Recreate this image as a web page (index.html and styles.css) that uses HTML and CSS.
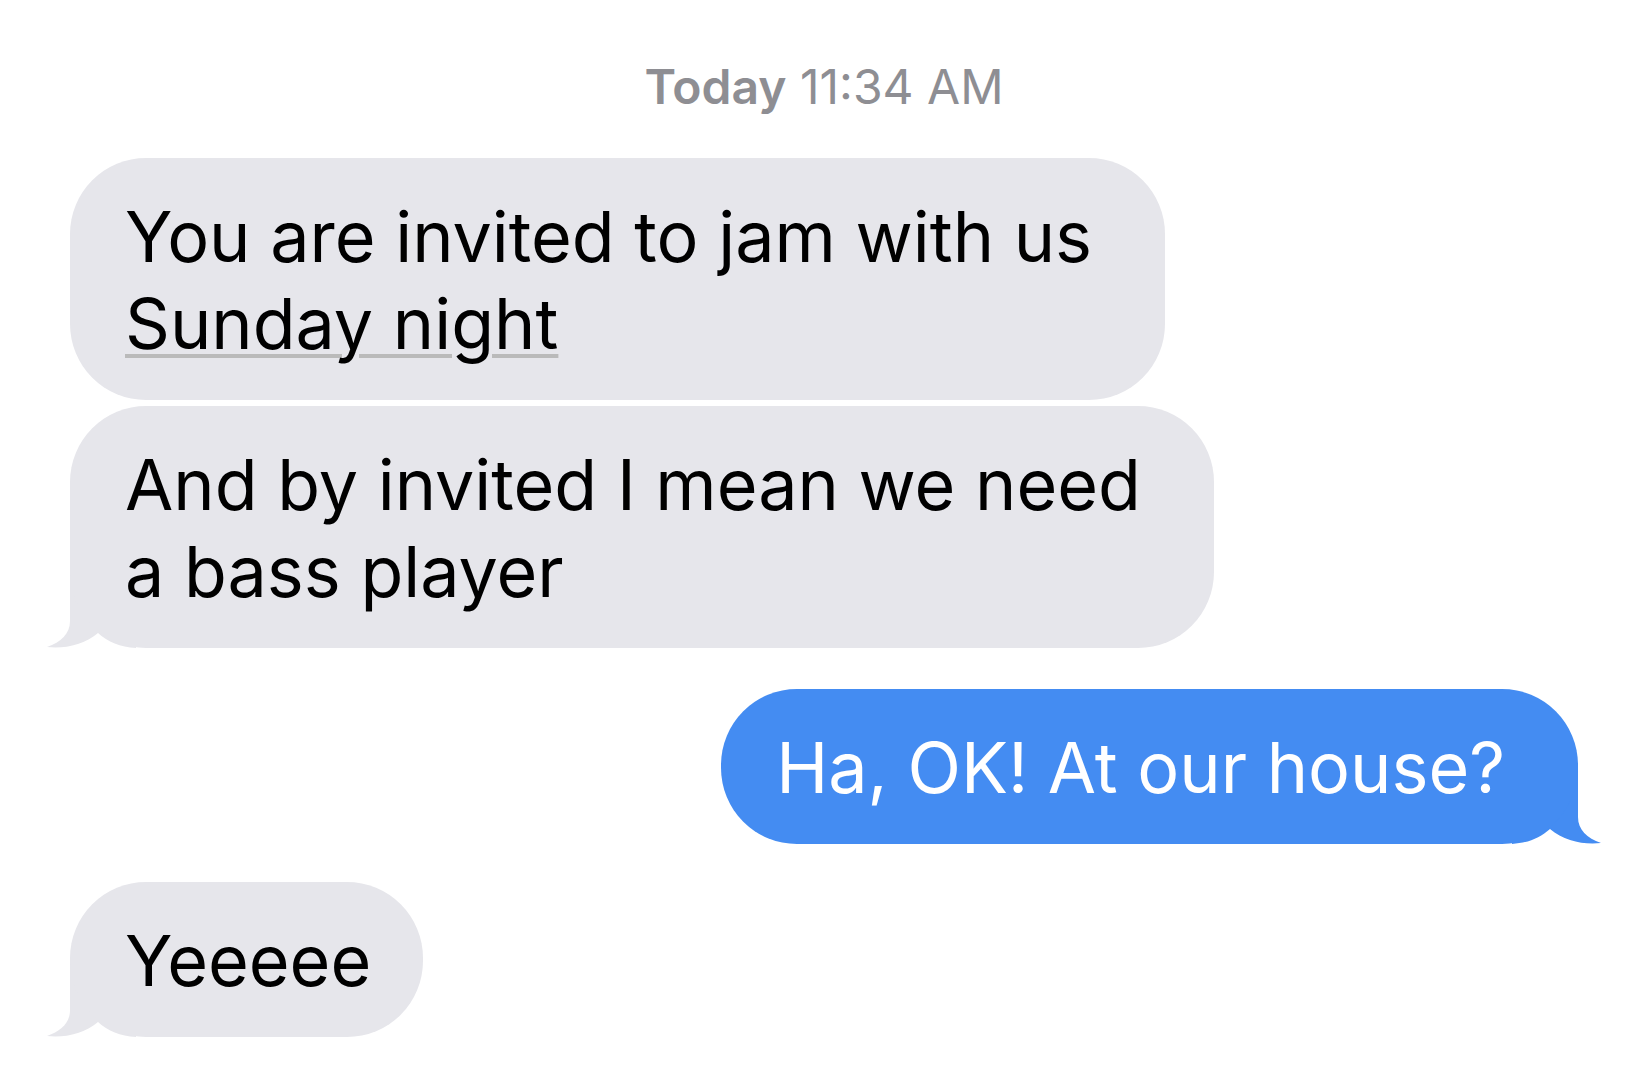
FILE: index.html
```html
<!DOCTYPE html>

<html>

<head>
    <meta charset="UTF-8" />
    <meta name="viewport" content="width=device-width, initial-scale=1.0">
    <link rel="stylesheet" href="styles.css">
</head>

<body>

    <main class="thread">

        <p class="stamp"><b>Today</b> 11:34 AM</p>

        <div class="msg msg-in">
            You are invited to jam with us<br>
            <span class="detected">Sunday night</span>
        </div>

        <div class="msg msg-in msg-tail">
            And by invited I mean we need<br>
            a bass player
            <svg class="tail" viewBox="0 0 90 80"><path d="M24 0 L24 53 C24 66 15 74 1 79 C18 81 38 77 52 65 C62 74 74 79 90 80 L90 0 Z"/></svg>
        </div>

        <div class="msg msg-out msg-tail">
            Ha, OK! At our house?
            <svg class="tail" viewBox="0 0 90 80"><path d="M24 0 L24 53 C24 66 15 74 1 79 C18 81 38 77 52 65 C62 74 74 79 90 80 L90 0 Z"/></svg>
        </div>

        <div class="msg msg-in msg-tail msg-short">
            Yeeeee
            <svg class="tail" viewBox="0 0 90 80"><path d="M24 0 L24 53 C24 66 15 74 1 79 C18 81 38 77 52 65 C62 74 74 79 90 80 L90 0 Z"/></svg>
        </div>

    </main>

</body>

</html>
```

FILE: styles.css
```css
* {
    margin: 0;
    padding: 0;
    box-sizing: border-box;
}

body {
    background: #fff;
    font-family: Inter, "Noto Sans", sans-serif;
    color: #000;
}

.thread {
    width: 100%;
    padding: 58px 71px 0 70px;
    display: flex;
    flex-direction: column;
    align-items: flex-start;
}

.stamp {
    align-self: center;
    font-size: 48px;
    line-height: 58px;
    color: #8e8e93;
    margin-bottom: 42px;
}

.stamp b {
    font-weight: 600;
}

.msg {
    position: relative;
    font-size: 70px;
    line-height: 87px;
    padding: 35px 73px 33px 55px;
    border-radius: 76px;
    white-space: nowrap;
}

.msg-short {
    padding-right: 52px;
}

.msg-in {
    background: #e6e6eb;
    margin-bottom: 6px;
}

.msg-out {
    align-self: flex-end;
    background: #448cf2;
    color: #fff;
    margin-top: 35px;
    margin-bottom: 38px;
}

.detected {
    text-decoration: underline;
    text-decoration-color: #bababa;
    text-decoration-thickness: 4px;
    text-underline-offset: 5px;
    text-decoration-skip-ink: auto;
}

.tail {
    position: absolute;
    bottom: 0;
    width: 90px;
    height: 80px;
    z-index: -1;
}

.msg-in .tail {
    left: -24px;
    fill: #e6e6eb;
}

.msg-out .tail {
    right: -24px;
    fill: #448cf2;
    transform: scaleX(-1);
}
```
